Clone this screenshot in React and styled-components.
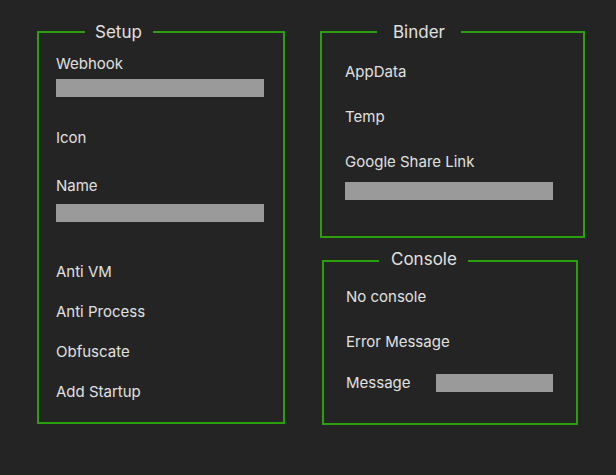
import React from "react";
import styled, { createGlobalStyle } from "styled-components";

const GREEN = "#2ca00c";
const TEXT = "#e0e0e0";

const Global = createGlobalStyle`
  html, body {
    margin: 0;
    padding: 0;
    background: #242424;
    min-height: 100%;
  }
  body {
    font-family: Inter, "Noto Sans", "Liberation Sans", sans-serif;
    color: ${TEXT};
  }
`;

const Page = styled.div`
  display: flex;
  align-items: flex-start;
  gap: 35px;
  padding: 31px 0 0 37px;
  min-height: 475px;
  box-sizing: border-box;
`;

const Column = styled.div`
  display: flex;
  flex-direction: column;
  align-items: flex-start;
`;

const Group = styled.section`
  position: relative;
  box-sizing: border-box;
  width: ${(p) => p.$w}px;
  height: ${(p) => p.$h}px;
  margin-left: ${(p) => p.$ml || 0}px;
  margin-top: ${(p) => p.$mt || 0}px;
  border: 2px solid ${GREEN};
  padding: ${(p) => p.$pt}px 0 0 ${(p) => p.$pl}px;
  display: flex;
  flex-direction: column;
  align-items: flex-start;
`;

const Title = styled.span`
  position: absolute;
  left: ${(p) => p.$left}px;
  top: ${(p) => p.$top}px;
  padding: 0 ${(p) => p.$pr}px 0 ${(p) => p.$pl}px;
  background: #242424;
  font-size: 17px;
  line-height: 20px;
  color: ${TEXT};
  white-space: nowrap;
`;

const Label = styled.div`
  font-size: 15px;
  line-height: 18px;
  height: 18px;
  margin-top: ${(p) => p.$mt || 0}px;
  white-space: nowrap;
  width: ${(p) => (p.$w ? `${p.$w}px` : "auto")};
  flex: none;
`;

const Bar = styled.div`
  width: ${(p) => p.$w}px;
  height: 18px;
  margin-top: ${(p) => p.$mt || 0}px;
  background: #9a9a9a;
  flex: none;
`;

const Row = styled.div`
  display: flex;
  align-items: center;
  margin-top: ${(p) => p.$mt || 0}px;
`;

export default function App() {
  return (
    <>
      <Global />
      <Page>
        <Group $w={248} $h={393} $pt={22} $pl={17}>
          <Title $left={46} $top={-11} $pl={10} $pr={11}>Setup</Title>
          <Label>Webhook</Label>
          <Bar $w={208} $mt={6} />
          <Label $mt={32}>Icon</Label>
          <Label $mt={30}>Name</Label>
          <Bar $w={208} $mt={9} />
          <Label $mt={41}>Anti VM</Label>
          <Label $mt={22}>Anti Process</Label>
          <Label $mt={22}>Obfuscate</Label>
          <Label $mt={22}>Add Startup</Label>
        </Group>
        <Column>
          <Group $w={265} $h={207} $pt={30} $pl={23}>
            <Title $left={55} $top={-11} $pl={16} $pr={16}>Binder</Title>
            <Label>AppData</Label>
            <Label $mt={27}>Temp</Label>
            <Label $mt={27}>Google Share Link</Label>
            <Bar $w={208} $mt={11} />
          </Group>
          <Group $w={256} $h={165} $ml={2} $mt={22} $pt={26} $pl={22}>
            <Title $left={55} $top={-13} $pl={12} $pr={11}>Console</Title>
            <Label>No console</Label>
            <Label $mt={27}>Error Message</Label>
            <Row $mt={23}>
              <Label $w={90}>Message</Label>
              <Bar $w={117} />
            </Row>
          </Group>
        </Column>
      </Page>
    </>
  );
}
